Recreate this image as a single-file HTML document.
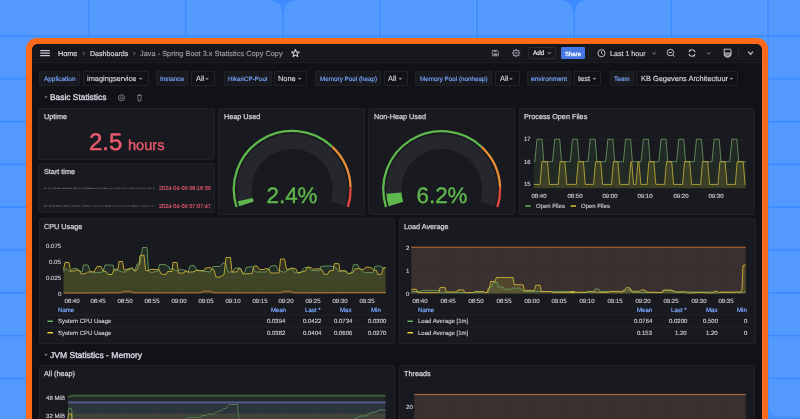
<!DOCTYPE html><html><head><meta charset="utf-8"><style>
html,body{margin:0;padding:0;}
body{width:800px;height:419px;overflow:hidden;position:relative;background:#5399fe;font-family:"Liberation Sans", sans-serif;}
.t{position:absolute;white-space:nowrap;line-height:1;will-change:transform;text-rendering:geometricPrecision;}
.b{position:absolute;}
svg{position:absolute;left:0;top:0;}
</style></head><body>
<svg width="800" height="419" viewBox="0 0 800 419"><rect x="86.50" y="0" width="1.1" height="419" fill="#62a4ff" opacity="0.7"/><rect x="87.65" y="0" width="1.5" height="419" fill="#3c8cff"/><rect x="183.60" y="0" width="1.1" height="419" fill="#62a4ff" opacity="0.7"/><rect x="184.75" y="0" width="1.5" height="419" fill="#3c8cff"/><rect x="280.70" y="0" width="1.1" height="419" fill="#62a4ff" opacity="0.7"/><rect x="281.85" y="0" width="1.5" height="419" fill="#3c8cff"/><rect x="377.80" y="0" width="1.1" height="419" fill="#62a4ff" opacity="0.7"/><rect x="378.95" y="0" width="1.5" height="419" fill="#3c8cff"/><rect x="474.90" y="0" width="1.1" height="419" fill="#62a4ff" opacity="0.7"/><rect x="476.05" y="0" width="1.5" height="419" fill="#3c8cff"/><rect x="572.00" y="0" width="1.1" height="419" fill="#62a4ff" opacity="0.7"/><rect x="573.15" y="0" width="1.5" height="419" fill="#3c8cff"/><rect x="669.10" y="0" width="1.1" height="419" fill="#62a4ff" opacity="0.7"/><rect x="670.25" y="0" width="1.5" height="419" fill="#3c8cff"/><rect x="766.20" y="0" width="1.1" height="419" fill="#62a4ff" opacity="0.7"/><rect x="767.35" y="0" width="1.5" height="419" fill="#3c8cff"/><rect x="0" y="35.25" width="800" height="1.5" fill="#3c8cff"/><rect x="0" y="78.05" width="800" height="1.5" fill="#3c8cff"/><rect x="0" y="120.85" width="800" height="1.5" fill="#3c8cff"/><rect x="0" y="163.65" width="800" height="1.5" fill="#3c8cff"/><rect x="0" y="206.45" width="800" height="1.5" fill="#3c8cff"/><rect x="0" y="249.25" width="800" height="1.5" fill="#3c8cff"/><rect x="0" y="292.05" width="800" height="1.5" fill="#3c8cff"/><rect x="0" y="334.85" width="800" height="1.5" fill="#3c8cff"/><rect x="0" y="377.65" width="800" height="1.5" fill="#3c8cff"/><rect x="0" y="420.45" width="800" height="1.5" fill="#3c8cff"/><path d="M266.9,0 C277.9,0.6 281.09999999999997,3.5 281.9,13 L283.9,13 C284.7,3.5 287.9,0.6 298.9,0 Z" fill="#3c8cff"/><path d="M557.9,0 C568.9,0.6 572.1,3.5 572.9,13 L574.9,13 C575.6999999999999,3.5 578.9,0.6 589.9,0 Z" fill="#3c8cff"/><path d="M769,419 L769,409 Q770,415.5 780,416 L800,416.4 L800,419 Z" fill="#3c8cff" opacity="0.6"/></svg>
<div class="b" style="left:25.70px;top:37.60px;width:742.60px;height:402.40px;background:#ff6a1a;border-radius:11px;"></div>
<div class="b" style="left:31.60px;top:43.90px;width:730.50px;height:396.10px;background:#111217;border-radius:6px;"></div>
<div class="b" style="left:31.60px;top:43.90px;width:730.50px;height:17.60px;background:#17181c;border-radius:0px;border-radius:6px 6px 0 0;"></div>
<div class="b" style="left:31.60px;top:61.60px;width:730.50px;height:0.80px;background:#1f2126;border-radius:0px;"></div>
<svg width="800" height="419" viewBox="0 0 800 419"><g fill="#ccccdc"><rect x="40.2" y="50" width="9.6" height="1.2"/><rect x="40.2" y="52.5" width="9.6" height="1.2"/><rect x="40.2" y="55" width="9.6" height="1.2"/></g></svg>
<div class="t" style="left:58.00px;top:50.45px;font-size:7.27px;color:#d8d8e2;font-weight:normal;-webkit-text-stroke:0.18px #d8d8e2;">Home</div>
<div class="t" style="left:89.70px;top:50.59px;font-size:7.1px;color:#d8d8e2;font-weight:normal;-webkit-text-stroke:0.18px #d8d8e2;">Dashboards</div>
<div class="t" style="left:139.75px;top:50.35px;font-size:7.38px;color:#a2a2ae;font-weight:normal;-webkit-text-stroke:0.1px #a2a2ae;">Java - Spring Boot 3.x Statistics Copy Copy</div>
<svg width="800" height="419" viewBox="0 0 800 419"><path d="M295.40,49.40 L296.43,51.98 L299.20,52.16 L297.06,53.94 L297.75,56.64 L295.40,55.15 L293.05,56.64 L293.74,53.94 L291.60,52.16 L294.37,51.98 Z" fill="none" stroke="#d0d0dc" stroke-width="1.1" stroke-linejoin="round"/><path d="M83,51.9 L84.6,53.5 L83,55.1 M133.3,51.9 L134.9,53.5 L133.3,55.1" fill="none" stroke="#8e8e99" stroke-width="0.9"/><path d="M492.3,50.3 L497.2,50.3 L498.3,51.4 L498.3,55.8 L492.3,55.8 Z" fill="none" stroke="#8e8e9a" stroke-width="0.9" stroke-linejoin="round"/><rect x="493.6" y="50.3" width="3" height="1.6" fill="#8e8e9a"/><rect x="493.5" y="53.3" width="3.6" height="2.5" fill="#8e8e9a"/><circle cx="516.2" cy="53" r="3.0" fill="none" stroke="#8e8e9a" stroke-width="1.0"/><circle cx="516.2" cy="53" r="1.1" fill="none" stroke="#8e8e9a" stroke-width="0.8"/><rect x="515.50" y="48.90" width="1.4" height="1.6" fill="#8e8e9a" transform="rotate(0 516.2 53)"/><rect x="515.50" y="48.90" width="1.4" height="1.6" fill="#8e8e9a" transform="rotate(45 516.2 53)"/><rect x="515.50" y="48.90" width="1.4" height="1.6" fill="#8e8e9a" transform="rotate(90 516.2 53)"/><rect x="515.50" y="48.90" width="1.4" height="1.6" fill="#8e8e9a" transform="rotate(135 516.2 53)"/><rect x="515.50" y="48.90" width="1.4" height="1.6" fill="#8e8e9a" transform="rotate(180 516.2 53)"/><rect x="515.50" y="48.90" width="1.4" height="1.6" fill="#8e8e9a" transform="rotate(225 516.2 53)"/><rect x="515.50" y="48.90" width="1.4" height="1.6" fill="#8e8e9a" transform="rotate(270 516.2 53)"/><rect x="515.50" y="48.90" width="1.4" height="1.6" fill="#8e8e9a" transform="rotate(315 516.2 53)"/><rect x="588.4" y="47" width="0.7" height="11" fill="#2c2e33"/><rect x="738.2" y="47" width="0.7" height="11" fill="#2c2e33"/><circle cx="601.5" cy="53.2" r="3.6" fill="none" stroke="#ccccdc" stroke-width="0.9"/><path d="M601.5,51 L601.5,53.3 L602.8,54.4" fill="none" stroke="#ccccdc" stroke-width="0.8"/><circle cx="670.4" cy="52.5" r="3.2" fill="none" stroke="#c4c4d0" stroke-width="1.0"/><path d="M669,52.5 L671.8,52.5 M672.8,54.9 L674.4,56.6" fill="none" stroke="#c4c4d0" stroke-width="1.0"/><path d="M688.90,51.87 A3.3,3.3 0 0 1 695.19,52.15 M695.10,54.13 A3.3,3.3 0 0 1 688.81,53.85" fill="none" stroke="#c4c4d0" stroke-width="1.1"/><circle cx="689.88" cy="50.47" r="0.9" fill="#c4c4d0"/><circle cx="694.12" cy="55.53" r="0.9" fill="#c4c4d0"/><path d="M724.2,49.2 L730.4,49.2 Q731,49.2 731,49.8 L731,54.6 Q731,56.9 727.6,57.2 Q724.2,56.9 724.2,54.6 L724.2,49.8 Q724.2,49.2 724.8,49.2 Z" fill="none" stroke="#c4c4d0" stroke-width="1.0"/><path d="M724.2,52.6 L731,52.6 L731,54.6 Q731,56.9 727.6,57.2 Q724.2,56.9 724.2,54.6 Z" fill="#c4c4d0" opacity="0.75"/><path d="M726.3,54.3 L727.6,55.5 L728.9,54.3" fill="none" stroke="#17181c" stroke-width="0.6"/><path d="M652.6999999999999,52.519999999999996 L654.3,54.28 L655.9,52.519999999999996" fill="none" stroke="#9a9aa6" stroke-width="0.9"/><path d="M707.1,52.519999999999996 L708.7,54.28 L710.3000000000001,52.519999999999996" fill="none" stroke="#9a9aa6" stroke-width="0.9"/><path d="M748.2,51.68 L750.6,54.32 L753.0,51.68" fill="none" stroke="#ccccdc" stroke-width="1.1"/></svg>
<div class="b" style="left:528.30px;top:47.30px;width:27.90px;height:11.60px;background:transparent;border:1px solid #2a2c31;box-sizing:border-box;border-radius:1.2px;"></div>
<div class="t" style="left:532.80px;top:51.17px;font-size:6.41px;color:#e0e0ea;font-weight:normal;-webkit-text-stroke:0.2px #e0e0ea;">Add</div>
<svg width="800" height="419" viewBox="0 0 800 419"><path d="M547.8,52.4 L549.3,53.9 L550.8,52.4" fill="none" stroke="#ccccdc" stroke-width="0.9"/></svg>
<div class="b" style="left:560.80px;top:47.30px;width:24.10px;height:11.60px;background:#4477e2;border-radius:1.2px;"></div>
<div class="t" style="left:565.00px;top:51.50px;font-size:6.03px;color:#ffffff;font-weight:normal;-webkit-text-stroke:0.25px #ffffff;">Share</div>
<div class="t" style="left:609.75px;top:50.78px;font-size:7.11px;color:#d0d0dc;font-weight:normal;-webkit-text-stroke:0.18px #d0d0dc;">Last 1 hour</div>
<div class="b" style="left:39.20px;top:70.60px;width:40.70px;height:15.70px;background:#181a1f;border:1px solid #1f2126;box-sizing:border-box;border-radius:1px;"></div>
<div class="t" style="left:43.80px;top:77.05px;font-size:6.44px;color:#7aa6ff;font-weight:normal;-webkit-text-stroke:0.15px #7aa6ff;">Application</div>
<div class="b" style="left:82.50px;top:70.60px;width:66.00px;height:15.70px;background:#111217;border:1px solid #212328;box-sizing:border-box;border-radius:1px;"></div>
<div class="t" style="left:86.50px;top:75.03px;font-size:7.4094999999999995px;color:#d8d8e2;font-weight:normal;-webkit-text-stroke:0.15px #d8d8e2;">imagingservice</div>
<svg width="800" height="419" viewBox="0 0 800 419"><path d="M139.2,78.2 L140.7,79.7 L142.2,78.2 Z" fill="#9a9aa6" stroke="#9a9aa6" stroke-width="0.4"/></svg>
<div class="b" style="left:156.20px;top:70.60px;width:32.20px;height:15.70px;background:#181a1f;border:1px solid #1f2126;box-sizing:border-box;border-radius:1px;"></div>
<div class="t" style="left:159.80px;top:77.10px;font-size:6.38px;color:#7aa6ff;font-weight:normal;-webkit-text-stroke:0.15px #7aa6ff;">Instance</div>
<div class="b" style="left:190.60px;top:70.60px;width:24.80px;height:15.70px;background:#111217;border:1px solid #212328;box-sizing:border-box;border-radius:1px;"></div>
<div class="t" style="left:195.70px;top:75.03px;font-size:7.4094999999999995px;color:#d8d8e2;font-weight:normal;-webkit-text-stroke:0.15px #d8d8e2;">All</div>
<svg width="800" height="419" viewBox="0 0 800 419"><path d="M205.5,78.2 L207,79.7 L208.5,78.2 Z" fill="#9a9aa6" stroke="#9a9aa6" stroke-width="0.4"/></svg>
<div class="b" style="left:223.70px;top:70.60px;width:47.90px;height:15.70px;background:#181a1f;border:1px solid #1f2126;box-sizing:border-box;border-radius:1px;"></div>
<div class="t" style="left:227.75px;top:77.19px;font-size:6.27px;color:#7aa6ff;font-weight:normal;-webkit-text-stroke:0.15px #7aa6ff;">HikariCP-Pool</div>
<div class="b" style="left:274.30px;top:70.60px;width:32.70px;height:15.70px;background:#111217;border:1px solid #212328;box-sizing:border-box;border-radius:1px;"></div>
<div class="t" style="left:278.30px;top:75.03px;font-size:7.4094999999999995px;color:#d8d8e2;font-weight:normal;-webkit-text-stroke:0.15px #d8d8e2;">None</div>
<svg width="800" height="419" viewBox="0 0 800 419"><path d="M298.25,78.2 L299.75,79.7 L301.25,78.2 Z" fill="#9a9aa6" stroke="#9a9aa6" stroke-width="0.4"/></svg>
<div class="b" style="left:315.25px;top:70.60px;width:66.00px;height:15.70px;background:#181a1f;border:1px solid #1f2126;box-sizing:border-box;border-radius:1px;"></div>
<div class="t" style="left:319.75px;top:77.15px;font-size:6.32px;color:#7aa6ff;font-weight:normal;-webkit-text-stroke:0.15px #7aa6ff;">Memory Pool (heap)</div>
<div class="b" style="left:383.50px;top:70.60px;width:24.00px;height:15.70px;background:#111217;border:1px solid #212328;box-sizing:border-box;border-radius:1px;"></div>
<div class="t" style="left:388.40px;top:75.03px;font-size:7.4094999999999995px;color:#d8d8e2;font-weight:normal;-webkit-text-stroke:0.15px #d8d8e2;">All</div>
<svg width="800" height="419" viewBox="0 0 800 419"><path d="M398.9,78.2 L400.4,79.7 L401.9,78.2 Z" fill="#9a9aa6" stroke="#9a9aa6" stroke-width="0.4"/></svg>
<div class="b" style="left:415.40px;top:70.60px;width:76.20px;height:15.70px;background:#181a1f;border:1px solid #1f2126;box-sizing:border-box;border-radius:1px;"></div>
<div class="t" style="left:419.60px;top:77.15px;font-size:6.32px;color:#7aa6ff;font-weight:normal;-webkit-text-stroke:0.15px #7aa6ff;">Memory Pool (nonheap)</div>
<div class="b" style="left:494.60px;top:70.60px;width:25.15px;height:15.70px;background:#111217;border:1px solid #212328;box-sizing:border-box;border-radius:1px;"></div>
<div class="t" style="left:499.70px;top:75.03px;font-size:7.4094999999999995px;color:#d8d8e2;font-weight:normal;-webkit-text-stroke:0.15px #d8d8e2;">All</div>
<svg width="800" height="419" viewBox="0 0 800 419"><path d="M509.5,78.2 L511,79.7 L512.5,78.2 Z" fill="#9a9aa6" stroke="#9a9aa6" stroke-width="0.4"/></svg>
<div class="b" style="left:527.25px;top:70.60px;width:43.75px;height:15.70px;background:#181a1f;border:1px solid #1f2126;box-sizing:border-box;border-radius:1px;"></div>
<div class="t" style="left:531.00px;top:77.23px;font-size:6.58px;color:#7aa6ff;font-weight:normal;-webkit-text-stroke:0.15px #7aa6ff;">environment</div>
<div class="b" style="left:573.75px;top:70.60px;width:27.50px;height:15.70px;background:#111217;border:1px solid #212328;box-sizing:border-box;border-radius:1px;"></div>
<div class="t" style="left:578.10px;top:74.94px;font-size:7.510999999999999px;color:#d8d8e2;font-weight:normal;-webkit-text-stroke:0.15px #d8d8e2;">test</div>
<svg width="800" height="419" viewBox="0 0 800 419"><path d="M592.9,78.2 L594.4,79.7 L595.9,78.2 Z" fill="#9a9aa6" stroke="#9a9aa6" stroke-width="0.4"/></svg>
<div class="b" style="left:610.25px;top:70.60px;width:23.65px;height:15.70px;background:#181a1f;border:1px solid #1f2126;box-sizing:border-box;border-radius:1px;"></div>
<div class="t" style="left:613.90px;top:77.08px;font-size:6.4px;color:#7aa6ff;font-weight:normal;-webkit-text-stroke:0.15px #7aa6ff;">Team</div>
<div class="b" style="left:636.10px;top:70.60px;width:102.40px;height:15.70px;background:#111217;border:1px solid #212328;box-sizing:border-box;border-radius:1px;"></div>
<div class="t" style="left:640.60px;top:75.00px;font-size:7.43995px;color:#d8d8e2;font-weight:normal;-webkit-text-stroke:0.15px #d8d8e2;">KB Gegevens Architectuur</div>
<svg width="800" height="419" viewBox="0 0 800 419"><path d="M729.8,78.2 L731.3,79.7 L732.8,78.2 Z" fill="#9a9aa6" stroke="#9a9aa6" stroke-width="0.4"/></svg>
<svg width="800" height="419" viewBox="0 0 800 419"><path d="M44.6,96.3 L45.9,97.5 L47.2,96.3" fill="none" stroke="#ccccdc" stroke-width="0.9"/></svg>
<div class="t" style="left:49.80px;top:93.09px;font-size:8.4px;color:#d8d8e4;font-weight:normal;-webkit-text-stroke:0.35px #d8d8e4;">Basic Statistics</div>
<svg width="800" height="419" viewBox="0 0 800 419"><path d="M44.6,354.1 L45.9,355.3 L47.2,354.1" fill="none" stroke="#ccccdc" stroke-width="0.9"/></svg>
<div class="t" style="left:49.80px;top:350.76px;font-size:8.55px;color:#d8d8e4;font-weight:normal;-webkit-text-stroke:0.35px #d8d8e4;">JVM Statistics - Memory</div>
<svg width="800" height="419" viewBox="0 0 800 419"><circle cx="121.5" cy="97.8" r="3" fill="none" stroke="#8a8a96" stroke-width="0.9"/><circle cx="121.5" cy="97.8" r="1.1" fill="none" stroke="#8a8a96" stroke-width="0.7"/><path d="M137.2,95.6 L141.8,95.6 M138.8,95.6 L138.8,94.6 L140.2,94.6 L140.2,95.6 M137.8,96.3 L138.2,101 L140.8,101 L141.2,96.3" fill="none" stroke="#8a8a96" stroke-width="0.8"/></svg>
<div class="b" style="left:38.30px;top:107.60px;width:177.10px;height:52.60px;background:#191a1f;border:1px solid #202227;box-sizing:border-box;border-radius:2px;"></div>
<div class="t" style="left:44.40px;top:113.26px;font-size:7.25px;color:#d4d4de;font-weight:normal;-webkit-text-stroke:0.25px #d4d4de;">Uptime</div>
<div class="b" style="left:38.30px;top:163.00px;width:177.10px;height:50.00px;background:#191a1f;border:1px solid #202227;box-sizing:border-box;border-radius:2px;"></div>
<div class="t" style="left:44.10px;top:168.06px;font-size:7.25px;color:#d4d4de;font-weight:normal;-webkit-text-stroke:0.25px #d4d4de;">Start time</div>
<div class="b" style="left:217.80px;top:107.60px;width:147.40px;height:107.60px;background:#191a1f;border:1px solid #202227;box-sizing:border-box;border-radius:2px;"></div>
<div class="t" style="left:223.70px;top:113.26px;font-size:7.25px;color:#d4d4de;font-weight:normal;-webkit-text-stroke:0.25px #d4d4de;">Heap Used</div>
<div class="b" style="left:368.40px;top:107.60px;width:147.10px;height:107.60px;background:#191a1f;border:1px solid #202227;box-sizing:border-box;border-radius:2px;"></div>
<div class="t" style="left:373.70px;top:113.26px;font-size:7.25px;color:#d4d4de;font-weight:normal;-webkit-text-stroke:0.25px #d4d4de;">Non-Heap Used</div>
<div class="b" style="left:518.80px;top:107.60px;width:236.70px;height:107.60px;background:#191a1f;border:1px solid #202227;box-sizing:border-box;border-radius:2px;"></div>
<div class="t" style="left:523.50px;top:113.26px;font-size:7.25px;color:#d4d4de;font-weight:normal;-webkit-text-stroke:0.25px #d4d4de;">Process Open Files</div>
<div class="b" style="left:38.50px;top:218.30px;width:356.50px;height:125.60px;background:#191a1f;border:1px solid #202227;box-sizing:border-box;border-radius:2px;"></div>
<div class="t" style="left:44.00px;top:223.46px;font-size:7.25px;color:#d4d4de;font-weight:normal;-webkit-text-stroke:0.25px #d4d4de;">CPU Usage</div>
<div class="b" style="left:398.50px;top:218.30px;width:357.00px;height:125.60px;background:#191a1f;border:1px solid #202227;box-sizing:border-box;border-radius:2px;"></div>
<div class="t" style="left:403.80px;top:223.46px;font-size:7.25px;color:#d4d4de;font-weight:normal;-webkit-text-stroke:0.25px #d4d4de;">Load Average</div>
<div class="b" style="left:38.80px;top:365.20px;width:356.00px;height:74.80px;background:#191a1f;border:1px solid #202227;box-sizing:border-box;border-radius:2px;"></div>
<div class="t" style="left:44.00px;top:370.36px;font-size:7.25px;color:#d4d4de;font-weight:normal;-webkit-text-stroke:0.25px #d4d4de;">All (heap)</div>
<div class="b" style="left:398.60px;top:365.20px;width:356.90px;height:74.80px;background:#191a1f;border:1px solid #202227;box-sizing:border-box;border-radius:2px;"></div>
<div class="t" style="left:403.50px;top:370.16px;font-size:7.25px;color:#d4d4de;font-weight:normal;-webkit-text-stroke:0.25px #d4d4de;">Threads</div>
<div class="t" style="left:89.40px;top:130.78px;font-size:24.0px;color:#ec5a6e;font-weight:normal;-webkit-text-stroke:0.5px #ec5a6e;">2.5</div>
<div class="t" style="left:127.90px;top:138.74px;font-size:14.6px;color:#ec5a6e;font-weight:normal;-webkit-text-stroke:0.35px #ec5a6e;">hours</div>
<svg width="800" height="419" viewBox="0 0 800 419"><rect x="43.60" y="187.85" width="1.98" height="0.7" fill="#a8a8b2" opacity="0.82"/><rect x="46.35" y="187.85" width="0.89" height="0.7" fill="#a8a8b2" opacity="0.62"/><rect x="47.93" y="187.85" width="2.61" height="0.7" fill="#a8a8b2" opacity="0.51"/><rect x="50.94" y="187.85" width="1.41" height="0.7" fill="#a8a8b2" opacity="0.58"/><rect x="52.98" y="187.85" width="3.37" height="0.7" fill="#a8a8b2" opacity="0.64"/><rect x="56.91" y="187.85" width="2.06" height="0.7" fill="#a8a8b2" opacity="0.83"/><rect x="59.46" y="187.85" width="1.00" height="0.7" fill="#a8a8b2" opacity="0.82"/><rect x="61.00" y="187.85" width="1.39" height="0.7" fill="#a8a8b2" opacity="0.67"/><rect x="62.95" y="187.85" width="3.02" height="0.7" fill="#a8a8b2" opacity="0.74"/><rect x="66.59" y="187.85" width="2.76" height="0.7" fill="#a8a8b2" opacity="0.71"/><rect x="70.08" y="187.85" width="2.27" height="0.7" fill="#a8a8b2" opacity="0.63"/><rect x="73.25" y="187.85" width="3.48" height="0.7" fill="#a8a8b2" opacity="0.79"/><rect x="77.65" y="187.85" width="2.23" height="0.7" fill="#a8a8b2" opacity="0.46"/><rect x="80.58" y="187.85" width="1.16" height="0.7" fill="#a8a8b2" opacity="0.76"/><rect x="82.07" y="187.85" width="2.89" height="0.7" fill="#a8a8b2" opacity="0.49"/><rect x="85.30" y="187.85" width="2.28" height="0.7" fill="#a8a8b2" opacity="0.79"/><rect x="88.19" y="187.85" width="2.94" height="0.7" fill="#a8a8b2" opacity="0.82"/><rect x="91.44" y="187.85" width="2.01" height="0.7" fill="#a8a8b2" opacity="0.76"/><rect x="93.96" y="187.85" width="3.09" height="0.7" fill="#a8a8b2" opacity="0.56"/><rect x="97.88" y="187.85" width="2.68" height="0.7" fill="#a8a8b2" opacity="0.67"/><rect x="101.53" y="187.85" width="2.01" height="0.7" fill="#a8a8b2" opacity="0.70"/><rect x="104.06" y="187.85" width="2.70" height="0.7" fill="#a8a8b2" opacity="0.84"/><rect x="107.46" y="187.85" width="2.57" height="0.7" fill="#a8a8b2" opacity="0.46"/><rect x="110.79" y="187.85" width="1.78" height="0.7" fill="#a8a8b2" opacity="0.64"/><rect x="113.55" y="187.85" width="3.03" height="0.7" fill="#a8a8b2" opacity="0.56"/><rect x="117.12" y="187.85" width="3.16" height="0.7" fill="#a8a8b2" opacity="0.58"/><rect x="120.97" y="187.85" width="2.70" height="0.7" fill="#a8a8b2" opacity="0.50"/><rect x="124.16" y="187.85" width="1.28" height="0.7" fill="#a8a8b2" opacity="0.80"/><rect x="126.44" y="187.85" width="2.89" height="0.7" fill="#a8a8b2" opacity="0.46"/><rect x="130.09" y="187.85" width="3.03" height="0.7" fill="#a8a8b2" opacity="0.63"/><rect x="133.62" y="187.85" width="1.76" height="0.7" fill="#a8a8b2" opacity="0.62"/><rect x="136.12" y="187.85" width="1.29" height="0.7" fill="#a8a8b2" opacity="0.72"/><rect x="137.74" y="187.85" width="0.96" height="0.7" fill="#a8a8b2" opacity="0.61"/><rect x="139.21" y="187.85" width="2.17" height="0.7" fill="#a8a8b2" opacity="0.67"/><rect x="141.92" y="187.85" width="1.06" height="0.7" fill="#a8a8b2" opacity="0.64"/><rect x="143.43" y="187.85" width="1.71" height="0.7" fill="#a8a8b2" opacity="0.60"/><rect x="145.80" y="187.85" width="1.62" height="0.7" fill="#a8a8b2" opacity="0.52"/><rect x="148.00" y="187.85" width="2.43" height="0.7" fill="#a8a8b2" opacity="0.75"/><rect x="151.00" y="187.85" width="1.22" height="0.7" fill="#a8a8b2" opacity="0.59"/><rect x="153.09" y="187.85" width="1.26" height="0.7" fill="#a8a8b2" opacity="0.80"/><rect x="154.93" y="187.85" width="0.07" height="0.7" fill="#a8a8b2" opacity="0.59"/><rect x="43.60" y="205.65" width="2.35" height="0.7" fill="#a8a8b2" opacity="0.78"/><rect x="46.51" y="205.65" width="2.08" height="0.7" fill="#a8a8b2" opacity="0.45"/><rect x="48.91" y="205.65" width="2.63" height="0.7" fill="#a8a8b2" opacity="0.67"/><rect x="52.18" y="205.65" width="2.84" height="0.7" fill="#a8a8b2" opacity="0.70"/><rect x="55.81" y="205.65" width="2.95" height="0.7" fill="#a8a8b2" opacity="0.84"/><rect x="59.41" y="205.65" width="3.36" height="0.7" fill="#a8a8b2" opacity="0.52"/><rect x="63.64" y="205.65" width="1.51" height="0.7" fill="#a8a8b2" opacity="0.76"/><rect x="65.59" y="205.65" width="2.59" height="0.7" fill="#a8a8b2" opacity="0.80"/><rect x="69.05" y="205.65" width="2.04" height="0.7" fill="#a8a8b2" opacity="0.57"/><rect x="71.93" y="205.65" width="1.23" height="0.7" fill="#a8a8b2" opacity="0.80"/><rect x="73.80" y="205.65" width="2.12" height="0.7" fill="#a8a8b2" opacity="0.81"/><rect x="76.55" y="205.65" width="3.46" height="0.7" fill="#a8a8b2" opacity="0.51"/><rect x="80.68" y="205.65" width="1.76" height="0.7" fill="#a8a8b2" opacity="0.46"/><rect x="83.14" y="205.65" width="2.35" height="0.7" fill="#a8a8b2" opacity="0.81"/><rect x="86.34" y="205.65" width="3.01" height="0.7" fill="#a8a8b2" opacity="0.77"/><rect x="90.34" y="205.65" width="0.97" height="0.7" fill="#a8a8b2" opacity="0.77"/><rect x="92.29" y="205.65" width="1.37" height="0.7" fill="#a8a8b2" opacity="0.54"/><rect x="94.30" y="205.65" width="1.42" height="0.7" fill="#a8a8b2" opacity="0.83"/><rect x="96.54" y="205.65" width="3.03" height="0.7" fill="#a8a8b2" opacity="0.47"/><rect x="100.14" y="205.65" width="2.27" height="0.7" fill="#a8a8b2" opacity="0.51"/><rect x="102.96" y="205.65" width="1.36" height="0.7" fill="#a8a8b2" opacity="0.54"/><rect x="104.96" y="205.65" width="2.76" height="0.7" fill="#a8a8b2" opacity="0.69"/><rect x="108.22" y="205.65" width="3.12" height="0.7" fill="#a8a8b2" opacity="0.73"/><rect x="112.34" y="205.65" width="2.41" height="0.7" fill="#a8a8b2" opacity="0.57"/><rect x="115.38" y="205.65" width="3.47" height="0.7" fill="#a8a8b2" opacity="0.55"/><rect x="119.22" y="205.65" width="2.32" height="0.7" fill="#a8a8b2" opacity="0.45"/><rect x="122.39" y="205.65" width="0.83" height="0.7" fill="#a8a8b2" opacity="0.74"/><rect x="124.13" y="205.65" width="2.09" height="0.7" fill="#a8a8b2" opacity="0.73"/><rect x="127.14" y="205.65" width="3.14" height="0.7" fill="#a8a8b2" opacity="0.62"/><rect x="131.26" y="205.65" width="3.02" height="0.7" fill="#a8a8b2" opacity="0.78"/><rect x="134.65" y="205.65" width="3.13" height="0.7" fill="#a8a8b2" opacity="0.79"/><rect x="138.78" y="205.65" width="2.18" height="0.7" fill="#a8a8b2" opacity="0.54"/><rect x="141.88" y="205.65" width="0.91" height="0.7" fill="#a8a8b2" opacity="0.79"/><rect x="143.27" y="205.65" width="2.49" height="0.7" fill="#a8a8b2" opacity="0.64"/><rect x="146.14" y="205.65" width="2.54" height="0.7" fill="#a8a8b2" opacity="0.61"/><rect x="149.63" y="205.65" width="2.07" height="0.7" fill="#a8a8b2" opacity="0.54"/><rect x="152.10" y="205.65" width="1.80" height="0.7" fill="#a8a8b2" opacity="0.57"/></svg>
<div class="t" style="right:588.70px;top:186.86px;font-size:5.6px;color:#ec5a6e;-webkit-text-stroke:0.12px #ec5a6e;">2024-04-09 08:16:39</div>
<div class="t" style="right:588.70px;top:204.86px;font-size:5.6px;color:#ec5a6e;-webkit-text-stroke:0.12px #ec5a6e;">2024-04-09 07:07:47</div>
<svg width="800" height="419" viewBox="0 0 800 419"><path d="M239.20,206.16 A55.6,55.6 0 1 1 345.20,206.16 L330.71,201.57 A40.4,40.4 0 1 0 253.69,201.57 Z" fill="#26272c"/><path d="M239.20,206.16 A55.6,55.6 0 0 1 237.90,201.32 L252.75,198.05 A40.4,40.4 0 0 0 253.69,201.57 Z" fill="#5fb84e"/><path d="M236.53,207.01 A58.4,58.4 0 0 1 332.06,146.67" fill="none" stroke="#5fb84e" stroke-width="2.3"/><path d="M332.06,146.67 A58.4,58.4 0 0 1 350.57,187.55" fill="none" stroke="#e98c36" stroke-width="2.3"/><path d="M350.57,187.55 A58.4,58.4 0 0 1 347.87,207.01" fill="none" stroke="#e2483e" stroke-width="2.3"/></svg>
<div class="t" style="left:192.20px;width:200px;text-align:center;top:184.74px;font-size:22.4px;color:#5fb84e;-webkit-text-stroke:0.35px #5fb84e;">2.4%</div>
<svg width="800" height="419" viewBox="0 0 800 419"><path d="M388.70,206.31 A55.6,55.6 0 1 1 494.70,206.31 L480.21,201.72 A40.4,40.4 0 1 0 403.19,201.72 Z" fill="#26272c"/><path d="M388.70,206.31 A55.6,55.6 0 0 1 386.25,193.63 L401.41,192.50 A40.4,40.4 0 0 0 403.19,201.72 Z" fill="#5fb84e"/><path d="M386.03,207.16 A58.4,58.4 0 0 1 481.56,146.82" fill="none" stroke="#5fb84e" stroke-width="2.3"/><path d="M481.56,146.82 A58.4,58.4 0 0 1 500.07,187.70" fill="none" stroke="#e98c36" stroke-width="2.3"/><path d="M500.07,187.70 A58.4,58.4 0 0 1 497.37,207.16" fill="none" stroke="#e2483e" stroke-width="2.3"/></svg>
<div class="t" style="left:341.70px;width:200px;text-align:center;top:184.74px;font-size:22.4px;color:#5fb84e;-webkit-text-stroke:0.35px #5fb84e;">6.2%</div>
<svg width="800" height="419" viewBox="0 0 800 419"><rect x="533.8" y="138.89999999999998" width="212.0" height="0.6" fill="#24262b"/><rect x="533.8" y="161.39999999999998" width="212.0" height="0.6" fill="#24262b"/><rect x="533.8" y="184.1" width="212.0" height="0.6" fill="#24262b"/><rect x="538.9000000000001" y="132" width="0.6" height="56.19999999999999" fill="#202227"/><rect x="574.7" y="132" width="0.6" height="56.19999999999999" fill="#202227"/><rect x="609.7" y="132" width="0.6" height="56.19999999999999" fill="#202227"/><rect x="644.6" y="132" width="0.6" height="56.19999999999999" fill="#202227"/><rect x="680.3000000000001" y="132" width="0.6" height="56.19999999999999" fill="#202227"/><rect x="716.1" y="132" width="0.6" height="56.19999999999999" fill="#202227"/><polygon points="533.8,188.2 533.80,161.70 534.80,161.70 537.00,139.20 542.00,139.20 543.80,161.70 552.52,161.70 554.72,139.20 559.72,139.20 561.52,161.70 570.24,161.70 572.44,139.20 577.44,139.20 579.24,161.70 587.96,161.70 590.16,139.20 595.16,139.20 596.96,161.70 605.68,161.70 607.88,139.20 612.88,139.20 614.68,161.70 623.40,161.70 625.60,139.20 630.60,139.20 632.40,161.70 641.12,161.70 643.32,139.20 648.32,139.20 650.12,161.70 658.84,161.70 661.04,139.20 666.04,139.20 667.84,161.70 676.56,161.70 678.76,139.20 683.76,139.20 685.56,161.70 694.28,161.70 696.48,139.20 701.48,139.20 703.28,161.70 712.00,161.70 714.20,139.20 719.20,139.20 721.00,161.70 729.72,161.70 731.92,139.20 736.92,139.20 738.72,161.70 745.80,161.70 745.8,188.2" fill="#73bf69" fill-opacity="0.10"/><polygon points="533.8,188.2 533.80,184.40 540.00,184.40 541.90,161.70 547.50,161.70 549.40,184.40 558.20,184.40 560.10,161.70 564.90,161.70 566.80,184.40 576.30,184.40 578.20,161.70 583.40,161.70 585.30,184.40 593.60,184.40 595.50,161.70 600.70,161.70 602.60,184.40 611.50,184.40 613.40,161.70 617.90,161.70 619.80,184.40 628.90,184.40 630.80,161.70 631.70,161.70 633.60,184.40 636.00,184.40 637.90,161.70 638.90,161.70 640.80,184.40 647.00,184.40 648.90,161.70 653.90,161.70 655.80,184.40 664.60,184.40 666.50,161.70 671.70,161.70 673.60,184.40 682.60,184.40 684.50,161.70 689.70,161.70 691.60,184.40 700.60,184.40 702.50,161.70 707.70,161.70 709.60,184.40 718.00,184.40 719.90,161.70 725.10,161.70 727.00,184.40 735.30,184.40 737.20,161.70 743.20,161.70 745.10,184.40 745.80,184.40 745.8,188.2" fill="#fade2a" fill-opacity="0.12"/><polyline points="533.80,161.70 534.80,161.70 537.00,139.20 542.00,139.20 543.80,161.70 552.52,161.70 554.72,139.20 559.72,139.20 561.52,161.70 570.24,161.70 572.44,139.20 577.44,139.20 579.24,161.70 587.96,161.70 590.16,139.20 595.16,139.20 596.96,161.70 605.68,161.70 607.88,139.20 612.88,139.20 614.68,161.70 623.40,161.70 625.60,139.20 630.60,139.20 632.40,161.70 641.12,161.70 643.32,139.20 648.32,139.20 650.12,161.70 658.84,161.70 661.04,139.20 666.04,139.20 667.84,161.70 676.56,161.70 678.76,139.20 683.76,139.20 685.56,161.70 694.28,161.70 696.48,139.20 701.48,139.20 703.28,161.70 712.00,161.70 714.20,139.20 719.20,139.20 721.00,161.70 729.72,161.70 731.92,139.20 736.92,139.20 738.72,161.70 745.80,161.70" fill="none" stroke="#6b9660" stroke-width="0.85"/><polyline points="533.80,184.40 540.00,184.40 541.90,161.70 547.50,161.70 549.40,184.40 558.20,184.40 560.10,161.70 564.90,161.70 566.80,184.40 576.30,184.40 578.20,161.70 583.40,161.70 585.30,184.40 593.60,184.40 595.50,161.70 600.70,161.70 602.60,184.40 611.50,184.40 613.40,161.70 617.90,161.70 619.80,184.40 628.90,184.40 630.80,161.70 631.70,161.70 633.60,184.40 636.00,184.40 637.90,161.70 638.90,161.70 640.80,184.40 647.00,184.40 648.90,161.70 653.90,161.70 655.80,184.40 664.60,184.40 666.50,161.70 671.70,161.70 673.60,184.40 682.60,184.40 684.50,161.70 689.70,161.70 691.60,184.40 700.60,184.40 702.50,161.70 707.70,161.70 709.60,184.40 718.00,184.40 719.90,161.70 725.10,161.70 727.00,184.40 735.30,184.40 737.20,161.70 743.20,161.70 745.10,184.40 745.80,184.40" fill="none" stroke="#c2ac3a" stroke-width="0.85"/><rect x="525.3" y="205.4" width="5.4" height="1.3" fill="#73bf69"/><rect x="570.6" y="205.4" width="5.4" height="1.3" fill="#fade2a"/></svg>
<div class="t" style="right:269.00px;top:137.22px;font-size:6.0px;color:#d2d2dc;-webkit-text-stroke:0.12px #d2d2dc;">17</div>
<div class="t" style="right:269.00px;top:159.72px;font-size:6.0px;color:#d2d2dc;-webkit-text-stroke:0.12px #d2d2dc;">16</div>
<div class="t" style="right:269.00px;top:182.42px;font-size:6.0px;color:#d2d2dc;-webkit-text-stroke:0.12px #d2d2dc;">15</div>
<div class="t" style="left:439.20px;width:200px;text-align:center;top:194.12px;font-size:6.0px;color:#d2d2dc;-webkit-text-stroke:0.12px #d2d2dc;">08:40</div>
<div class="t" style="left:475.00px;width:200px;text-align:center;top:194.12px;font-size:6.0px;color:#d2d2dc;-webkit-text-stroke:0.12px #d2d2dc;">08:50</div>
<div class="t" style="left:510.00px;width:200px;text-align:center;top:194.12px;font-size:6.0px;color:#d2d2dc;-webkit-text-stroke:0.12px #d2d2dc;">09:00</div>
<div class="t" style="left:544.90px;width:200px;text-align:center;top:194.12px;font-size:6.0px;color:#d2d2dc;-webkit-text-stroke:0.12px #d2d2dc;">09:10</div>
<div class="t" style="left:580.60px;width:200px;text-align:center;top:194.12px;font-size:6.0px;color:#d2d2dc;-webkit-text-stroke:0.12px #d2d2dc;">09:20</div>
<div class="t" style="left:616.40px;width:200px;text-align:center;top:194.12px;font-size:6.0px;color:#d2d2dc;-webkit-text-stroke:0.12px #d2d2dc;">09:30</div>
<div class="t" style="left:536.00px;top:204.22px;font-size:6.0px;color:#d2d2dc;font-weight:normal;-webkit-text-stroke:0.12px #d2d2dc;">Open Files</div>
<div class="t" style="left:581.00px;top:204.22px;font-size:6.0px;color:#d2d2dc;font-weight:normal;-webkit-text-stroke:0.12px #d2d2dc;">Open Files</div>
<svg width="800" height="419" viewBox="0 0 800 419"><rect x="63.5" y="293.10" width="322.1" height="0.6" fill="#212328"/><rect x="63.5" y="277.15" width="322.1" height="0.6" fill="#212328"/><rect x="63.5" y="261.20" width="322.1" height="0.6" fill="#212328"/><rect x="63.5" y="245.25" width="322.1" height="0.6" fill="#212328"/><rect x="71.30" y="240" width="0.6" height="53.39999999999998" fill="#1f2126"/><rect x="98.15" y="240" width="0.6" height="53.39999999999998" fill="#1f2126"/><rect x="125.00" y="240" width="0.6" height="53.39999999999998" fill="#1f2126"/><rect x="151.85" y="240" width="0.6" height="53.39999999999998" fill="#1f2126"/><rect x="178.70" y="240" width="0.6" height="53.39999999999998" fill="#1f2126"/><rect x="205.55" y="240" width="0.6" height="53.39999999999998" fill="#1f2126"/><rect x="232.40" y="240" width="0.6" height="53.39999999999998" fill="#1f2126"/><rect x="259.25" y="240" width="0.6" height="53.39999999999998" fill="#1f2126"/><rect x="286.10" y="240" width="0.6" height="53.39999999999998" fill="#1f2126"/><rect x="312.95" y="240" width="0.6" height="53.39999999999998" fill="#1f2126"/><rect x="339.80" y="240" width="0.6" height="53.39999999999998" fill="#1f2126"/><rect x="366.65" y="240" width="0.6" height="53.39999999999998" fill="#1f2126"/><polygon points="63.5,293.4 63.50,272.00 63.50,272.00 66.00,268.50 70.00,272.00 73.00,268.50 77.00,268.50 80.00,271.00 82.00,272.00 83.50,265.00 88.00,265.00 90.00,271.00 94.00,273.00 103.00,272.00 105.00,265.00 113.00,265.00 114.00,270.00 115.50,271.00 118.00,270.00 122.00,272.00 126.00,272.00 127.00,269.00 132.00,268.00 134.50,271.50 137.00,264.00 139.00,264.00 140.00,264.00 142.50,247.50 147.00,247.50 148.50,271.50 152.00,272.50 158.00,271.00 159.50,264.50 165.00,264.50 169.00,267.00 170.00,270.00 172.00,268.00 176.00,271.00 181.00,269.50 184.00,270.00 188.00,272.00 190.00,266.00 194.00,265.50 197.00,270.00 201.00,271.00 210.00,272.00 213.00,266.50 220.00,266.50 223.00,263.00 225.50,263.00 228.00,272.00 233.00,272.00 235.00,268.00 240.00,268.00 243.00,273.50 245.00,272.00 246.00,267.50 252.00,266.50 255.50,272.00 266.00,272.00 271.00,266.00 276.00,265.50 278.00,270.00 283.00,272.00 286.00,272.00 288.00,270.00 292.00,268.00 294.50,273.00 300.00,273.00 304.50,267.56 309.00,267.56 311.25,270.37 319.69,270.94 320.81,266.44 329.25,265.87 332.62,266.44 335.44,267.00 338.25,271.50 344.44,270.37 348.37,273.75 351.75,272.62 353.44,264.75 357.94,264.75 359.62,268.69 364.12,272.62 373.12,272.62 374.81,266.44 379.87,265.87 383.25,268.12 385.50,267.56 385.60,267.56 385.6,293.4" fill="#73bf69" fill-opacity="0.12"/><polygon points="63.5,293.4 63.50,270.00 63.50,270.00 65.00,262.50 69.00,262.50 70.50,271.00 75.00,271.00 76.00,270.00 79.50,270.50 81.00,274.00 86.00,273.50 87.50,272.00 94.00,271.80 97.00,266.50 101.00,266.50 103.00,271.00 106.00,271.50 108.00,274.50 112.00,274.50 114.00,269.50 118.00,269.00 119.00,261.50 122.50,261.50 124.00,270.00 130.00,269.50 132.00,267.50 134.00,270.00 136.00,271.00 139.00,265.00 140.00,255.50 144.00,255.00 145.50,270.00 148.00,271.00 150.00,269.50 159.00,269.50 161.00,274.00 166.00,274.50 167.50,271.50 172.00,271.50 173.00,262.50 177.00,262.50 178.50,273.00 184.00,273.00 185.50,270.00 187.00,272.00 193.00,272.00 196.00,270.50 204.00,270.50 205.50,268.00 210.00,267.50 212.00,269.00 214.00,270.00 216.00,277.00 220.00,277.00 224.00,274.50 226.00,257.50 230.50,257.50 232.00,272.00 237.00,272.00 238.50,268.50 241.00,269.00 243.00,274.00 252.00,273.50 254.00,266.00 257.00,266.00 259.50,269.50 264.00,269.50 266.00,268.50 269.00,269.00 270.50,273.00 279.00,273.00 280.50,259.00 284.50,259.00 286.50,269.50 290.00,269.00 292.00,268.00 296.00,269.00 297.50,272.50 300.00,272.50 305.62,270.94 307.31,267.00 311.25,267.56 312.94,269.25 319.69,268.69 321.94,269.81 324.19,274.31 327.56,274.31 329.25,270.94 333.19,270.37 334.31,263.62 338.81,263.62 339.94,270.94 346.12,270.94 348.37,273.75 352.87,272.62 355.12,268.69 359.62,268.69 363.00,269.81 366.37,267.00 370.87,267.56 373.69,269.81 376.50,270.37 377.62,274.31 381.56,274.31 383.25,268.12 385.50,267.56 385.60,267.56 385.6,293.4" fill="#fade2a" fill-opacity="0.13"/><polyline points="63.50,272.00 63.50,272.00 66.00,268.50 70.00,272.00 73.00,268.50 77.00,268.50 80.00,271.00 82.00,272.00 83.50,265.00 88.00,265.00 90.00,271.00 94.00,273.00 103.00,272.00 105.00,265.00 113.00,265.00 114.00,270.00 115.50,271.00 118.00,270.00 122.00,272.00 126.00,272.00 127.00,269.00 132.00,268.00 134.50,271.50 137.00,264.00 139.00,264.00 140.00,264.00 142.50,247.50 147.00,247.50 148.50,271.50 152.00,272.50 158.00,271.00 159.50,264.50 165.00,264.50 169.00,267.00 170.00,270.00 172.00,268.00 176.00,271.00 181.00,269.50 184.00,270.00 188.00,272.00 190.00,266.00 194.00,265.50 197.00,270.00 201.00,271.00 210.00,272.00 213.00,266.50 220.00,266.50 223.00,263.00 225.50,263.00 228.00,272.00 233.00,272.00 235.00,268.00 240.00,268.00 243.00,273.50 245.00,272.00 246.00,267.50 252.00,266.50 255.50,272.00 266.00,272.00 271.00,266.00 276.00,265.50 278.00,270.00 283.00,272.00 286.00,272.00 288.00,270.00 292.00,268.00 294.50,273.00 300.00,273.00 304.50,267.56 309.00,267.56 311.25,270.37 319.69,270.94 320.81,266.44 329.25,265.87 332.62,266.44 335.44,267.00 338.25,271.50 344.44,270.37 348.37,273.75 351.75,272.62 353.44,264.75 357.94,264.75 359.62,268.69 364.12,272.62 373.12,272.62 374.81,266.44 379.87,265.87 383.25,268.12 385.50,267.56 385.60,267.56" fill="none" stroke="#6a9a5c" stroke-width="0.9"/><polyline points="63.50,270.00 63.50,270.00 65.00,262.50 69.00,262.50 70.50,271.00 75.00,271.00 76.00,270.00 79.50,270.50 81.00,274.00 86.00,273.50 87.50,272.00 94.00,271.80 97.00,266.50 101.00,266.50 103.00,271.00 106.00,271.50 108.00,274.50 112.00,274.50 114.00,269.50 118.00,269.00 119.00,261.50 122.50,261.50 124.00,270.00 130.00,269.50 132.00,267.50 134.00,270.00 136.00,271.00 139.00,265.00 140.00,255.50 144.00,255.00 145.50,270.00 148.00,271.00 150.00,269.50 159.00,269.50 161.00,274.00 166.00,274.50 167.50,271.50 172.00,271.50 173.00,262.50 177.00,262.50 178.50,273.00 184.00,273.00 185.50,270.00 187.00,272.00 193.00,272.00 196.00,270.50 204.00,270.50 205.50,268.00 210.00,267.50 212.00,269.00 214.00,270.00 216.00,277.00 220.00,277.00 224.00,274.50 226.00,257.50 230.50,257.50 232.00,272.00 237.00,272.00 238.50,268.50 241.00,269.00 243.00,274.00 252.00,273.50 254.00,266.00 257.00,266.00 259.50,269.50 264.00,269.50 266.00,268.50 269.00,269.00 270.50,273.00 279.00,273.00 280.50,259.00 284.50,259.00 286.50,269.50 290.00,269.00 292.00,268.00 296.00,269.00 297.50,272.50 300.00,272.50 305.62,270.94 307.31,267.00 311.25,267.56 312.94,269.25 319.69,268.69 321.94,269.81 324.19,274.31 327.56,274.31 329.25,270.94 333.19,270.37 334.31,263.62 338.81,263.62 339.94,270.94 346.12,270.94 348.37,273.75 352.87,272.62 355.12,268.69 359.62,268.69 363.00,269.81 366.37,267.00 370.87,267.56 373.69,269.81 376.50,270.37 377.62,274.31 381.56,274.31 383.25,268.12 385.50,267.56 385.60,267.56" fill="none" stroke="#c9b238" stroke-width="0.9"/><polyline points="63.50,293.00 120.00,292.80 124.00,291.40 130.00,291.40 134.00,292.80 200.00,292.80 204.00,291.20 210.00,291.20 214.00,292.80 280.00,292.80 284.00,291.40 290.00,291.40 294.00,292.80 385.60,292.60" fill="none" stroke="#c7793a" stroke-width="0.9"/><rect x="43" y="314.6" width="347" height="0.6" fill="#26282d"/><rect x="43" y="326.8" width="347" height="0.6" fill="#26282d"/><rect x="47.4" y="320.6" width="5.6" height="1.4" fill="#73bf69"/><rect x="47.4" y="332.0" width="5.6" height="1.4" fill="#fade2a"/></svg>
<div class="t" style="right:738.80px;top:292.14px;font-size:6.1px;color:#d2d2dc;-webkit-text-stroke:0.12px #d2d2dc;">0</div>
<div class="t" style="right:738.80px;top:276.19px;font-size:6.1px;color:#d2d2dc;-webkit-text-stroke:0.12px #d2d2dc;">0.025</div>
<div class="t" style="right:738.80px;top:260.24px;font-size:6.1px;color:#d2d2dc;-webkit-text-stroke:0.12px #d2d2dc;">0.05</div>
<div class="t" style="right:738.80px;top:244.29px;font-size:6.1px;color:#d2d2dc;-webkit-text-stroke:0.12px #d2d2dc;">0.075</div>
<div class="t" style="left:-28.40px;width:200px;text-align:center;top:298.64px;font-size:6.1px;color:#d2d2dc;-webkit-text-stroke:0.12px #d2d2dc;">08:40</div>
<div class="t" style="left:-1.55px;width:200px;text-align:center;top:298.64px;font-size:6.1px;color:#d2d2dc;-webkit-text-stroke:0.12px #d2d2dc;">08:45</div>
<div class="t" style="left:25.30px;width:200px;text-align:center;top:298.64px;font-size:6.1px;color:#d2d2dc;-webkit-text-stroke:0.12px #d2d2dc;">08:50</div>
<div class="t" style="left:52.15px;width:200px;text-align:center;top:298.64px;font-size:6.1px;color:#d2d2dc;-webkit-text-stroke:0.12px #d2d2dc;">08:55</div>
<div class="t" style="left:79.00px;width:200px;text-align:center;top:298.64px;font-size:6.1px;color:#d2d2dc;-webkit-text-stroke:0.12px #d2d2dc;">09:00</div>
<div class="t" style="left:105.85px;width:200px;text-align:center;top:298.64px;font-size:6.1px;color:#d2d2dc;-webkit-text-stroke:0.12px #d2d2dc;">09:05</div>
<div class="t" style="left:132.70px;width:200px;text-align:center;top:298.64px;font-size:6.1px;color:#d2d2dc;-webkit-text-stroke:0.12px #d2d2dc;">09:10</div>
<div class="t" style="left:159.55px;width:200px;text-align:center;top:298.64px;font-size:6.1px;color:#d2d2dc;-webkit-text-stroke:0.12px #d2d2dc;">09:15</div>
<div class="t" style="left:186.40px;width:200px;text-align:center;top:298.64px;font-size:6.1px;color:#d2d2dc;-webkit-text-stroke:0.12px #d2d2dc;">09:20</div>
<div class="t" style="left:213.25px;width:200px;text-align:center;top:298.64px;font-size:6.1px;color:#d2d2dc;-webkit-text-stroke:0.12px #d2d2dc;">09:25</div>
<div class="t" style="left:240.10px;width:200px;text-align:center;top:298.64px;font-size:6.1px;color:#d2d2dc;-webkit-text-stroke:0.12px #d2d2dc;">09:30</div>
<div class="t" style="left:266.95px;width:200px;text-align:center;top:298.64px;font-size:6.1px;color:#d2d2dc;-webkit-text-stroke:0.12px #d2d2dc;">09:35</div>
<div class="t" style="left:58.10px;top:308.04px;font-size:6.1px;color:#7aa6ff;font-weight:normal;-webkit-text-stroke:0.2px #7aa6ff;">Name</div>
<div class="t" style="right:514.00px;top:307.64px;font-size:6.1px;color:#7aa6ff;-webkit-text-stroke:0.2px #7aa6ff;">Mean</div>
<div class="t" style="right:479.10px;top:307.64px;font-size:6.1px;color:#7aa6ff;-webkit-text-stroke:0.2px #7aa6ff;">Last *</div>
<div class="t" style="right:448.70px;top:307.64px;font-size:6.1px;color:#7aa6ff;-webkit-text-stroke:0.2px #7aa6ff;">Max</div>
<div class="t" style="right:418.70px;top:307.64px;font-size:6.1px;color:#7aa6ff;-webkit-text-stroke:0.2px #7aa6ff;">Min</div>
<div class="t" style="left:57.80px;top:319.02px;font-size:6.0px;color:#d2d2dc;font-weight:normal;-webkit-text-stroke:0.12px #d2d2dc;">System CPU Usage</div>
<div class="t" style="left:57.80px;top:330.92px;font-size:6.0px;color:#d2d2dc;font-weight:normal;-webkit-text-stroke:0.12px #d2d2dc;">System CPU Usage</div>
<div class="t" style="right:514.40px;top:319.02px;font-size:6.0px;color:#d2d2dc;-webkit-text-stroke:0.12px #d2d2dc;">0.0394</div>
<div class="t" style="right:514.40px;top:331.02px;font-size:6.0px;color:#d2d2dc;-webkit-text-stroke:0.12px #d2d2dc;">0.0382</div>
<div class="t" style="right:479.10px;top:319.02px;font-size:6.0px;color:#d2d2dc;-webkit-text-stroke:0.12px #d2d2dc;">0.0422</div>
<div class="t" style="right:479.10px;top:331.02px;font-size:6.0px;color:#d2d2dc;-webkit-text-stroke:0.12px #d2d2dc;">0.0404</div>
<div class="t" style="right:447.80px;top:319.02px;font-size:6.0px;color:#d2d2dc;-webkit-text-stroke:0.12px #d2d2dc;">0.0734</div>
<div class="t" style="right:447.80px;top:331.02px;font-size:6.0px;color:#d2d2dc;-webkit-text-stroke:0.12px #d2d2dc;">0.0606</div>
<div class="t" style="right:413.50px;top:319.02px;font-size:6.0px;color:#d2d2dc;-webkit-text-stroke:0.12px #d2d2dc;">0.0300</div>
<div class="t" style="right:413.50px;top:331.02px;font-size:6.0px;color:#d2d2dc;-webkit-text-stroke:0.12px #d2d2dc;">0.0270</div>
<svg width="800" height="419" viewBox="0 0 800 419"><rect x="411.2" y="247.20" width="334.60" height="46.20" fill="#3a302f"/><rect x="411.2" y="293.10" width="334.59999999999997" height="0.6" fill="#3a302c"/><rect x="411.2" y="270.00" width="334.59999999999997" height="0.6" fill="#3a302c"/><rect x="419.90" y="247.20" width="0.6" height="46.20" fill="#3a302c"/><rect x="447.74" y="247.20" width="0.6" height="46.20" fill="#3a302c"/><rect x="475.58" y="247.20" width="0.6" height="46.20" fill="#3a302c"/><rect x="503.42" y="247.20" width="0.6" height="46.20" fill="#3a302c"/><rect x="531.26" y="247.20" width="0.6" height="46.20" fill="#3a302c"/><rect x="559.10" y="247.20" width="0.6" height="46.20" fill="#3a302c"/><rect x="586.94" y="247.20" width="0.6" height="46.20" fill="#3a302c"/><rect x="614.78" y="247.20" width="0.6" height="46.20" fill="#3a302c"/><rect x="642.62" y="247.20" width="0.6" height="46.20" fill="#3a302c"/><rect x="670.46" y="247.20" width="0.6" height="46.20" fill="#3a302c"/><rect x="698.30" y="247.20" width="0.6" height="46.20" fill="#3a302c"/><rect x="726.14" y="247.20" width="0.6" height="46.20" fill="#3a302c"/><rect x="411.2" y="246.70" width="334.60" height="1.0" fill="#c46e3c"/><polygon points="411.2,293.4 411.20,291.51 411.20,291.51 420.80,291.51 422.00,290.38 438.80,290.38 440.00,292.63 487.26,292.63 488.31,292.63 489.51,287.01 491.68,287.01 492.88,282.51 497.39,282.51 498.51,287.01 503.01,287.01 504.14,289.26 510.81,289.26 512.01,288.13 519.81,288.13 521.01,289.26 522.06,289.26 523.26,291.51 573.82,291.51 575.02,292.63 570.00,292.50 592.50,292.00 593.80,292.00 595.00,289.00 597.50,289.00 598.80,289.00 600.00,291.50 623.75,291.25 626.30,291.25 627.50,290.00 630.00,290.00 631.30,290.00 632.50,292.50 660.00,292.50 661.30,292.50 662.50,290.50 670.00,290.00 671.30,290.00 672.50,292.00 711.30,292.00 712.50,293.00 718.80,293.00 720.00,292.00 742.50,292.50 744.60,292.50 745.80,291.25 745.8,293.4" fill="#73bf69" fill-opacity="0.12"/><polygon points="411.2,293.4 411.20,289.26 411.20,289.26 415.25,289.26 416.30,289.26 417.50,292.63 438.88,292.63 440.00,287.46 444.50,287.46 445.11,287.46 446.31,291.96 455.76,291.96 456.81,291.96 458.01,289.93 462.51,289.93 463.56,289.93 464.76,292.63 472.63,292.63 473.68,292.63 474.88,291.51 483.81,291.51 485.01,292.63 487.18,292.63 488.38,288.13 489.43,288.13 490.63,281.38 495.14,281.38 496.26,277.56 512.01,277.56 513.06,277.56 514.26,284.76 522.14,284.76 523.19,284.76 524.39,290.38 534.51,290.38 535.64,285.21 540.14,285.21 541.26,291.51 551.32,291.51 552.52,292.63 573.82,292.63 575.02,291.51 570.00,292.00 585.00,292.50 586.30,292.50 587.50,291.25 595.00,292.00 605.00,292.50 608.80,292.50 610.00,291.50 622.50,292.00 623.75,290.00 625.05,290.00 626.25,287.50 630.00,288.00 631.25,291.25 640.00,291.25 641.25,290.00 645.00,290.00 646.25,292.00 660.00,292.50 662.55,292.50 663.75,290.00 672.50,290.50 673.80,290.50 675.00,292.00 686.30,292.00 687.50,293.00 700.00,292.50 712.50,293.00 713.75,291.25 717.50,291.25 718.75,292.50 740.00,292.00 740.80,292.00 742.00,290.00 743.00,265.50 745.00,265.00 745.80,265.00 745.8,293.4" fill="#fade2a" fill-opacity="0.13"/><polyline points="411.20,291.51 411.20,291.51 420.80,291.51 422.00,290.38 438.80,290.38 440.00,292.63 487.26,292.63 488.31,292.63 489.51,287.01 491.68,287.01 492.88,282.51 497.39,282.51 498.51,287.01 503.01,287.01 504.14,289.26 510.81,289.26 512.01,288.13 519.81,288.13 521.01,289.26 522.06,289.26 523.26,291.51 573.82,291.51 575.02,292.63 570.00,292.50 592.50,292.00 593.80,292.00 595.00,289.00 597.50,289.00 598.80,289.00 600.00,291.50 623.75,291.25 626.30,291.25 627.50,290.00 630.00,290.00 631.30,290.00 632.50,292.50 660.00,292.50 661.30,292.50 662.50,290.50 670.00,290.00 671.30,290.00 672.50,292.00 711.30,292.00 712.50,293.00 718.80,293.00 720.00,292.00 742.50,292.50 744.60,292.50 745.80,291.25" fill="none" stroke="#6a9a5c" stroke-width="0.9"/><polyline points="411.20,289.26 411.20,289.26 415.25,289.26 416.30,289.26 417.50,292.63 438.88,292.63 440.00,287.46 444.50,287.46 445.11,287.46 446.31,291.96 455.76,291.96 456.81,291.96 458.01,289.93 462.51,289.93 463.56,289.93 464.76,292.63 472.63,292.63 473.68,292.63 474.88,291.51 483.81,291.51 485.01,292.63 487.18,292.63 488.38,288.13 489.43,288.13 490.63,281.38 495.14,281.38 496.26,277.56 512.01,277.56 513.06,277.56 514.26,284.76 522.14,284.76 523.19,284.76 524.39,290.38 534.51,290.38 535.64,285.21 540.14,285.21 541.26,291.51 551.32,291.51 552.52,292.63 573.82,292.63 575.02,291.51 570.00,292.00 585.00,292.50 586.30,292.50 587.50,291.25 595.00,292.00 605.00,292.50 608.80,292.50 610.00,291.50 622.50,292.00 623.75,290.00 625.05,290.00 626.25,287.50 630.00,288.00 631.25,291.25 640.00,291.25 641.25,290.00 645.00,290.00 646.25,292.00 660.00,292.50 662.55,292.50 663.75,290.00 672.50,290.50 673.80,290.50 675.00,292.00 686.30,292.00 687.50,293.00 700.00,292.50 712.50,293.00 713.75,291.25 717.50,291.25 718.75,292.50 740.00,292.00 740.80,292.00 742.00,290.00 743.00,265.50 745.00,265.00 745.80,265.00" fill="none" stroke="#c9b238" stroke-width="0.9"/><rect x="403" y="314.6" width="347" height="0.6" fill="#26282d"/><rect x="403" y="326.8" width="347" height="0.6" fill="#26282d"/><rect x="407.4" y="320.6" width="5.6" height="1.4" fill="#73bf69"/><rect x="407.4" y="332.0" width="5.6" height="1.4" fill="#fade2a"/></svg>
<div class="t" style="right:390.70px;top:292.14px;font-size:6.1px;color:#d2d2dc;-webkit-text-stroke:0.12px #d2d2dc;">0</div>
<div class="t" style="right:390.70px;top:269.04px;font-size:6.1px;color:#d2d2dc;-webkit-text-stroke:0.12px #d2d2dc;">1</div>
<div class="t" style="right:390.70px;top:245.94px;font-size:6.1px;color:#d2d2dc;-webkit-text-stroke:0.12px #d2d2dc;">2</div>
<div class="t" style="left:320.20px;width:200px;text-align:center;top:298.64px;font-size:6.1px;color:#d2d2dc;-webkit-text-stroke:0.12px #d2d2dc;">08:40</div>
<div class="t" style="left:348.04px;width:200px;text-align:center;top:298.64px;font-size:6.1px;color:#d2d2dc;-webkit-text-stroke:0.12px #d2d2dc;">08:45</div>
<div class="t" style="left:375.88px;width:200px;text-align:center;top:298.64px;font-size:6.1px;color:#d2d2dc;-webkit-text-stroke:0.12px #d2d2dc;">08:50</div>
<div class="t" style="left:403.72px;width:200px;text-align:center;top:298.64px;font-size:6.1px;color:#d2d2dc;-webkit-text-stroke:0.12px #d2d2dc;">08:55</div>
<div class="t" style="left:431.56px;width:200px;text-align:center;top:298.64px;font-size:6.1px;color:#d2d2dc;-webkit-text-stroke:0.12px #d2d2dc;">09:00</div>
<div class="t" style="left:459.40px;width:200px;text-align:center;top:298.64px;font-size:6.1px;color:#d2d2dc;-webkit-text-stroke:0.12px #d2d2dc;">09:05</div>
<div class="t" style="left:487.24px;width:200px;text-align:center;top:298.64px;font-size:6.1px;color:#d2d2dc;-webkit-text-stroke:0.12px #d2d2dc;">09:10</div>
<div class="t" style="left:515.08px;width:200px;text-align:center;top:298.64px;font-size:6.1px;color:#d2d2dc;-webkit-text-stroke:0.12px #d2d2dc;">09:15</div>
<div class="t" style="left:542.92px;width:200px;text-align:center;top:298.64px;font-size:6.1px;color:#d2d2dc;-webkit-text-stroke:0.12px #d2d2dc;">09:20</div>
<div class="t" style="left:570.76px;width:200px;text-align:center;top:298.64px;font-size:6.1px;color:#d2d2dc;-webkit-text-stroke:0.12px #d2d2dc;">09:25</div>
<div class="t" style="left:598.60px;width:200px;text-align:center;top:298.64px;font-size:6.1px;color:#d2d2dc;-webkit-text-stroke:0.12px #d2d2dc;">09:30</div>
<div class="t" style="left:626.44px;width:200px;text-align:center;top:298.64px;font-size:6.1px;color:#d2d2dc;-webkit-text-stroke:0.12px #d2d2dc;">09:35</div>
<div class="t" style="left:418.10px;top:308.04px;font-size:6.1px;color:#7aa6ff;font-weight:normal;-webkit-text-stroke:0.2px #7aa6ff;">Name</div>
<div class="t" style="right:148.00px;top:307.64px;font-size:6.1px;color:#7aa6ff;-webkit-text-stroke:0.2px #7aa6ff;">Mean</div>
<div class="t" style="right:113.00px;top:307.64px;font-size:6.1px;color:#7aa6ff;-webkit-text-stroke:0.2px #7aa6ff;">Last *</div>
<div class="t" style="right:82.00px;top:307.64px;font-size:6.1px;color:#7aa6ff;-webkit-text-stroke:0.2px #7aa6ff;">Max</div>
<div class="t" style="right:53.00px;top:307.64px;font-size:6.1px;color:#7aa6ff;-webkit-text-stroke:0.2px #7aa6ff;">Min</div>
<div class="t" style="left:417.80px;top:319.02px;font-size:6.0px;color:#d2d2dc;font-weight:normal;-webkit-text-stroke:0.12px #d2d2dc;">Load Average [1m]</div>
<div class="t" style="left:417.80px;top:330.92px;font-size:6.0px;color:#d2d2dc;font-weight:normal;-webkit-text-stroke:0.12px #d2d2dc;">Load Average [1m]</div>
<div class="t" style="right:148.00px;top:319.02px;font-size:6.0px;color:#d2d2dc;-webkit-text-stroke:0.12px #d2d2dc;">0.0764</div>
<div class="t" style="right:148.00px;top:331.02px;font-size:6.0px;color:#d2d2dc;-webkit-text-stroke:0.12px #d2d2dc;">0.153</div>
<div class="t" style="right:113.00px;top:319.02px;font-size:6.0px;color:#d2d2dc;-webkit-text-stroke:0.12px #d2d2dc;">0.0200</div>
<div class="t" style="right:113.00px;top:331.02px;font-size:6.0px;color:#d2d2dc;-webkit-text-stroke:0.12px #d2d2dc;">1.20</div>
<div class="t" style="right:82.00px;top:319.02px;font-size:6.0px;color:#d2d2dc;-webkit-text-stroke:0.12px #d2d2dc;">0.500</div>
<div class="t" style="right:82.00px;top:331.02px;font-size:6.0px;color:#d2d2dc;-webkit-text-stroke:0.12px #d2d2dc;">1.20</div>
<div class="t" style="right:53.00px;top:319.02px;font-size:6.0px;color:#d2d2dc;-webkit-text-stroke:0.12px #d2d2dc;">0</div>
<div class="t" style="right:53.00px;top:331.02px;font-size:6.0px;color:#d2d2dc;-webkit-text-stroke:0.12px #d2d2dc;">0</div>
<svg width="800" height="419" viewBox="0 0 800 419"><rect x="67.9" y="395.6" width="317.60" height="23.40" fill="#73bf69" fill-opacity="0.10"/><rect x="67.9" y="402.4" width="317.60" height="16.60" fill="#8f8fff" fill-opacity="0.10"/><rect x="67.9" y="413.6" width="317.60" height="5.40" fill="#fade2a" fill-opacity="0.10"/><rect x="71.30" y="388" width="0.6" height="31" fill="#ffffff" fill-opacity="0.03"/><rect x="98.15" y="388" width="0.6" height="31" fill="#ffffff" fill-opacity="0.03"/><rect x="125.00" y="388" width="0.6" height="31" fill="#ffffff" fill-opacity="0.03"/><rect x="151.85" y="388" width="0.6" height="31" fill="#ffffff" fill-opacity="0.03"/><rect x="178.70" y="388" width="0.6" height="31" fill="#ffffff" fill-opacity="0.03"/><rect x="205.55" y="388" width="0.6" height="31" fill="#ffffff" fill-opacity="0.03"/><rect x="232.40" y="388" width="0.6" height="31" fill="#ffffff" fill-opacity="0.03"/><rect x="259.25" y="388" width="0.6" height="31" fill="#ffffff" fill-opacity="0.03"/><rect x="286.10" y="388" width="0.6" height="31" fill="#ffffff" fill-opacity="0.03"/><rect x="312.95" y="388" width="0.6" height="31" fill="#ffffff" fill-opacity="0.03"/><rect x="339.80" y="388" width="0.6" height="31" fill="#ffffff" fill-opacity="0.03"/><rect x="366.65" y="388" width="0.6" height="31" fill="#ffffff" fill-opacity="0.03"/><polyline points="67.9,397.20000000000005 71.9,395.6 385.5,395.6" fill="none" stroke="#40603a" stroke-width="1.6"/><rect x="67.9" y="401.4" width="317.60" height="2.0" fill="#585a8e"/><polyline points="186.00,418.50 190.00,417.50 200.00,417.50 201.50,415.50 206.00,415.50 207.50,414.00 214.00,414.00 215.50,412.00 218.00,412.00 219.50,410.50 222.00,410.50 223.50,408.50 226.00,408.50 229.00,404.50 237.50,404.50 238.50,419.00" fill="none" stroke="#557f4c" stroke-width="0.9"/><polyline points="355.00,419.00 360.00,416.00 366.00,416.00 370.00,413.00 376.00,412.00 380.00,410.00 385.50,410.00" fill="none" stroke="#5f8f55" stroke-width="0.9"/><polyline points="68,419 68.5,409 71,408 72,411 72,419" fill="none" stroke="#5f8f55" stroke-width="0.9"/><polyline points="68,419 68.5,414 71.5,414 72,419" fill="none" stroke="#c9b238" stroke-width="0.9"/></svg>
<div class="t" style="right:734.80px;top:395.54px;font-size:6.1px;color:#d2d2dc;-webkit-text-stroke:0.12px #d2d2dc;">48 MiB</div>
<div class="t" style="right:734.80px;top:413.54px;font-size:6.1px;color:#d2d2dc;-webkit-text-stroke:0.12px #d2d2dc;">32 MiB</div>
<svg width="800" height="419" viewBox="0 0 800 419"><rect x="414.3" y="394.5" width="331.30" height="24.50" fill="#3a302f"/><rect x="422.20" y="394.5" width="0.6" height="24.5" fill="#3a302c"/><rect x="449.80" y="394.5" width="0.6" height="24.5" fill="#3a302c"/><rect x="477.40" y="394.5" width="0.6" height="24.5" fill="#3a302c"/><rect x="505.00" y="394.5" width="0.6" height="24.5" fill="#3a302c"/><rect x="532.60" y="394.5" width="0.6" height="24.5" fill="#3a302c"/><rect x="560.20" y="394.5" width="0.6" height="24.5" fill="#3a302c"/><rect x="587.80" y="394.5" width="0.6" height="24.5" fill="#3a302c"/><rect x="615.40" y="394.5" width="0.6" height="24.5" fill="#3a302c"/><rect x="643.00" y="394.5" width="0.6" height="24.5" fill="#3a302c"/><rect x="670.60" y="394.5" width="0.6" height="24.5" fill="#3a302c"/><rect x="698.20" y="394.5" width="0.6" height="24.5" fill="#3a302c"/><rect x="725.80" y="394.5" width="0.6" height="24.5" fill="#3a302c"/><rect x="414.3" y="394.0" width="331.30" height="1.0" fill="#b86a3c"/></svg>
<div class="t" style="right:387.40px;top:405.34px;font-size:6.1px;color:#d2d2dc;-webkit-text-stroke:0.12px #d2d2dc;">20</div>
</body></html>
